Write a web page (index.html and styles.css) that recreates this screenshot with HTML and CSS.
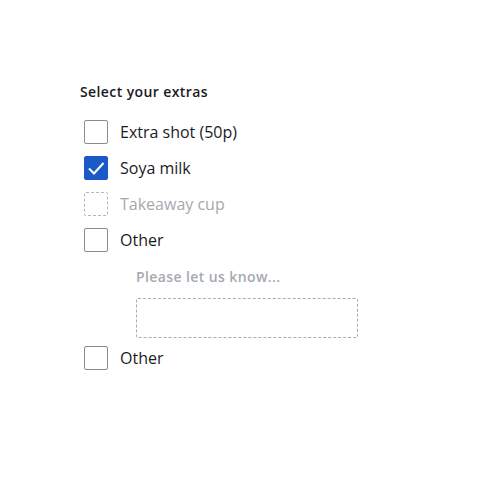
FILE: index.html
```html
<!DOCTYPE html>
<html lang="en">
<head>
<meta charset="utf-8">
<title>Select your extras</title>
<link rel="stylesheet" href="styles.css">
</head>
<body>
<form class="page">
  <fieldset class="group">
    <legend class="group-label">Select your extras</legend>
    <div class="options">
      <label class="option">
        <span class="box"></span>
        <span class="text">Extra shot (50p)</span>
      </label>
      <label class="option">
        <span class="box box-checked">
          <svg viewBox="0 0 24 24" width="24" height="24"><polyline points="5,12.5 10,17.5 19.5,7" fill="none" stroke="#fff" stroke-width="2"/></svg>
        </span>
        <span class="text">Soya milk</span>
      </label>
      <label class="option option-disabled">
        <span class="box box-disabled"></span>
        <span class="text">Takeaway cup</span>
      </label>
      <label class="option">
        <span class="box"></span>
        <span class="text">Other</span>
      </label>
      <div class="conditional">
        <div class="cond-label">Please let us know...</div>
        <div class="cond-input"></div>
      </div>
      <label class="option">
        <span class="box"></span>
        <span class="text">Other</span>
      </label>
    </div>
  </fieldset>
</form>
</body>
</html>
```
FILE: styles.css
```css
html, body {
  margin: 0;
  padding: 0;
  background: #ffffff;
}
body {
  font-family: "Open Sans", "Noto Sans", sans-serif;
  color: #1b1b1f;
}
.page {
  padding: 82px 0 0 80px;
}
.group {
  border: 0;
  margin: 0;
  padding: 0;
}
.group-label {
  padding: 0;
  font-size: 14px;
  font-weight: 600;
  letter-spacing: 0.4px;
  line-height: 20px;
  color: #1b1b1f;
  margin-bottom: 12px;
}
.options {
  display: flex;
  flex-direction: column;
  padding-left: 4px;
}
.option {
  display: flex;
  align-items: center;
  gap: 12px;
  height: 36px;
  font-size: 16px;
}
.box {
  box-sizing: border-box;
  width: 24px;
  height: 24px;
  border: 1px solid #868a93;
  border-radius: 2px;
  flex: none;
  display: block;
}
.box-checked {
  background: #1a5ac7;
  border-color: #1a5ac7;
}
.box-checked svg {
  display: block;
  margin: -1px;
}
.box-disabled {
  border: 1px dashed #b2b5bb;
}
.option-disabled .text {
  color: #a6a9b0;
}
.text {
  line-height: 22px;
}
.conditional {
  display: flex;
  flex-direction: column;
  padding: 9px 0 0 52px;
  height: 82px;
  box-sizing: border-box;
}
.cond-label {
  font-size: 14px;
  font-weight: 600;
  letter-spacing: 0.4px;
  line-height: 20px;
  color: #a6a9b0;
  margin-bottom: 11px;
}
.cond-input {
  box-sizing: border-box;
  width: 222px;
  height: 40px;
  border: 1px dashed #a9acb2;
  border-radius: 2px;
}
```
